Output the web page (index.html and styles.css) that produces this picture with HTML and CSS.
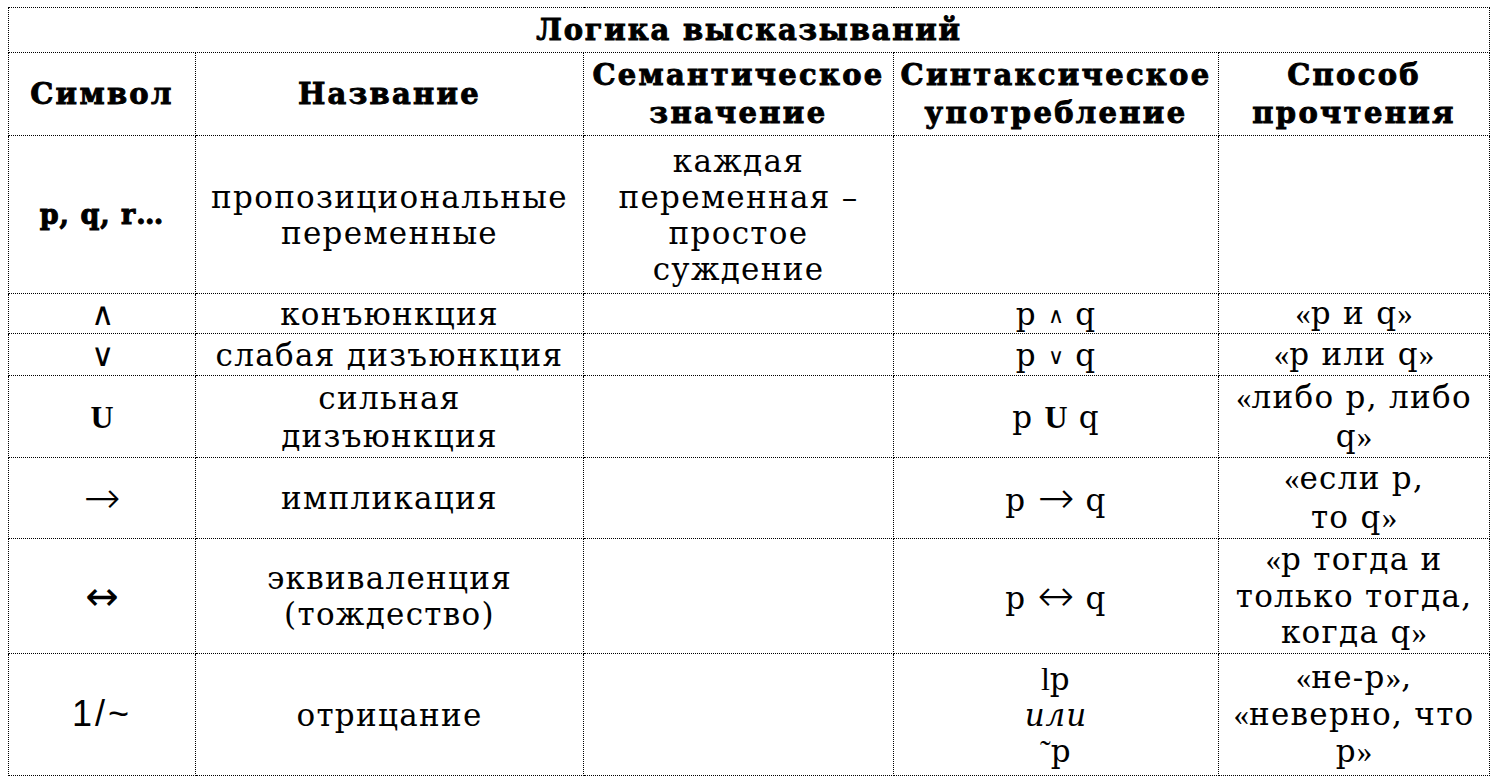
FILE: index.html
```html
<!DOCTYPE html>
<html lang="ru">
<head>
<meta charset="utf-8">
<title>Логика высказываний</title>
<link rel="stylesheet" href="styles.css">
</head>
<body>
<table class="logic">
  <colgroup>
    <col class="c-sym">
    <col class="c-name">
    <col class="c-sem">
    <col class="c-syn">
    <col class="c-read">
  </colgroup>
  <tr class="r-title">
    <th colspan="5" class="title">Логика высказываний</th>
  </tr>
  <tr class="r-head">
    <th>Символ</th>
    <th>Название</th>
    <th>Семантическое<br>значение</th>
    <th>Синтаксическое<br>употребление</th>
    <th>Способ<br>прочтения</th>
  </tr>
  <tr class="r-var">
    <td class="sym-bold">p, q, r…</td>
    <td>пропозициональные<br>переменные</td>
    <td>каждая<br>переменная –<br>простое<br>суждение</td>
    <td></td>
    <td></td>
  </tr>
  <tr class="r-and">
    <td><span class="sym-logic">∧</span></td>
    <td>конъюнкция</td>
    <td></td>
    <td>p <span class="op-small">∧</span> q</td>
    <td><span class="q">«</span>p и q<span class="q">»</span></td>
  </tr>
  <tr class="r-or">
    <td><span class="sym-logic">∨</span></td>
    <td>слабая дизъюнкция</td>
    <td></td>
    <td>p <span class="op-small">∨</span> q</td>
    <td><span class="q">«</span>p или q<span class="q">»</span></td>
  </tr>
  <tr class="r-xor">
    <td><b class="sym-u">U</b></td>
    <td>сильная<br>дизъюнкция</td>
    <td></td>
    <td>p <b class="sym-u">U</b> q</td>
    <td><span class="q">«</span>либо p, либо<br>q<span class="q">»</span></td>
  </tr>
  <tr class="r-imp">
    <td><span class="arrow">→</span></td>
    <td>импликация</td>
    <td></td>
    <td>p <span class="arrow">→</span> q</td>
    <td><span class="q">«</span>если p,<br>то q<span class="q">»</span></td>
  </tr>
  <tr class="r-eq">
    <td><span class="arrow arrow-bold">↔</span></td>
    <td>эквиваленция<br>(тождество)</td>
    <td></td>
    <td>p <span class="arrow">↔</span> q</td>
    <td><span class="q">«</span>p тогда и<br>только тогда,<br>когда q<span class="q">»</span></td>
  </tr>
  <tr class="r-neg">
    <td><span class="sym-neg">1/~</span></td>
    <td>отрицание</td>
    <td></td>
    <td><span class="neg-l">l</span>p<br><i>или</i><br><span class="tilde">˜</span>p</td>
    <td><span class="q">«</span>не-p<span class="q">»</span>,<br><span class="q">«</span>неверно, что<br>p<span class="q">»</span></td>
  </tr>
</table>
</body>
</html>
```

FILE: styles.css
```css
html, body {
  background: #ffffff;
}
body {
  margin: 7px 8px;
  color: #000;
  font-family: "DejaVu Serif", "Liberation Serif", serif;
}
.logic {
  border-collapse: collapse;
  table-layout: fixed;
  width: 1482px;
  font-size: 31px;
  letter-spacing: 1.3px;
}
.c-sym { width: 187px; }
.c-name { width: 388px; }
.c-sem { width: 310px; }
.c-syn { width: 325px; }
.c-read { width: 271px; }

.logic th,
.logic td {
  border: 1px dotted #000;
  padding: 0 2px;
  text-align: center;
  vertical-align: middle;
  line-height: 36px;
  white-space: nowrap;
}
.logic th {
  font-weight: 700;
  font-size: 29px;
  letter-spacing: 2.3px;
  line-height: 38px;
  -webkit-text-stroke: 0.9px #000;
}
.logic th.title {
  letter-spacing: 1.8px;
}
.r-title { height: 45px; }
.r-head { height: 83px; }
.r-var { height: 158px; }
.r-and { height: 40px; }
.r-or { height: 42px; }
.r-xor { height: 82px; }
.r-imp { height: 81px; }
.r-eq { height: 115px; }
.r-neg { height: 122px; }

.r-xor td, .r-imp td { line-height: 38px; }

.sym-bold {
  font-weight: 700;
  font-size: 27px;
  letter-spacing: 1px;
  -webkit-text-stroke: 1px #000;
}
.sym-logic {
  font-family: "DejaVu Sans", sans-serif;
  font-weight: 200;
  font-size: 32px;
  letter-spacing: 0;
  line-height: 1;
}
.op-small {
  font-family: "DejaVu Sans", sans-serif;
  font-weight: 200;
  font-size: 22px;
  letter-spacing: 0;
  line-height: 1;
  vertical-align: 2px;
}
.sym-u {
  font-family: "Liberation Serif", serif;
  font-weight: 700;
  font-size: 32px;
  letter-spacing: 0;
}
.arrow {
  font-family: "DejaVu Sans", sans-serif;
  font-weight: 200;
  font-size: 44px;
  letter-spacing: 0;
  line-height: 1;
  vertical-align: -2px;
}
.arrow-bold {
  font-weight: 400;
  font-size: 40px;
}
.sym-neg {
  font-family: "Liberation Sans", sans-serif;
  font-size: 36px;
  letter-spacing: 3px;
}
.q {
  font-family: "Liberation Serif", serif;
  letter-spacing: 0;
}
.neg-l {
  font-family: "Liberation Serif", serif;
  font-size: 32px;
  letter-spacing: 0;
}
.tilde {
  font-family: "Liberation Serif", serif;
  font-size: 32px;
  letter-spacing: 0;
}
.logic i {
  font-style: italic;
  letter-spacing: 1px;
}
```
